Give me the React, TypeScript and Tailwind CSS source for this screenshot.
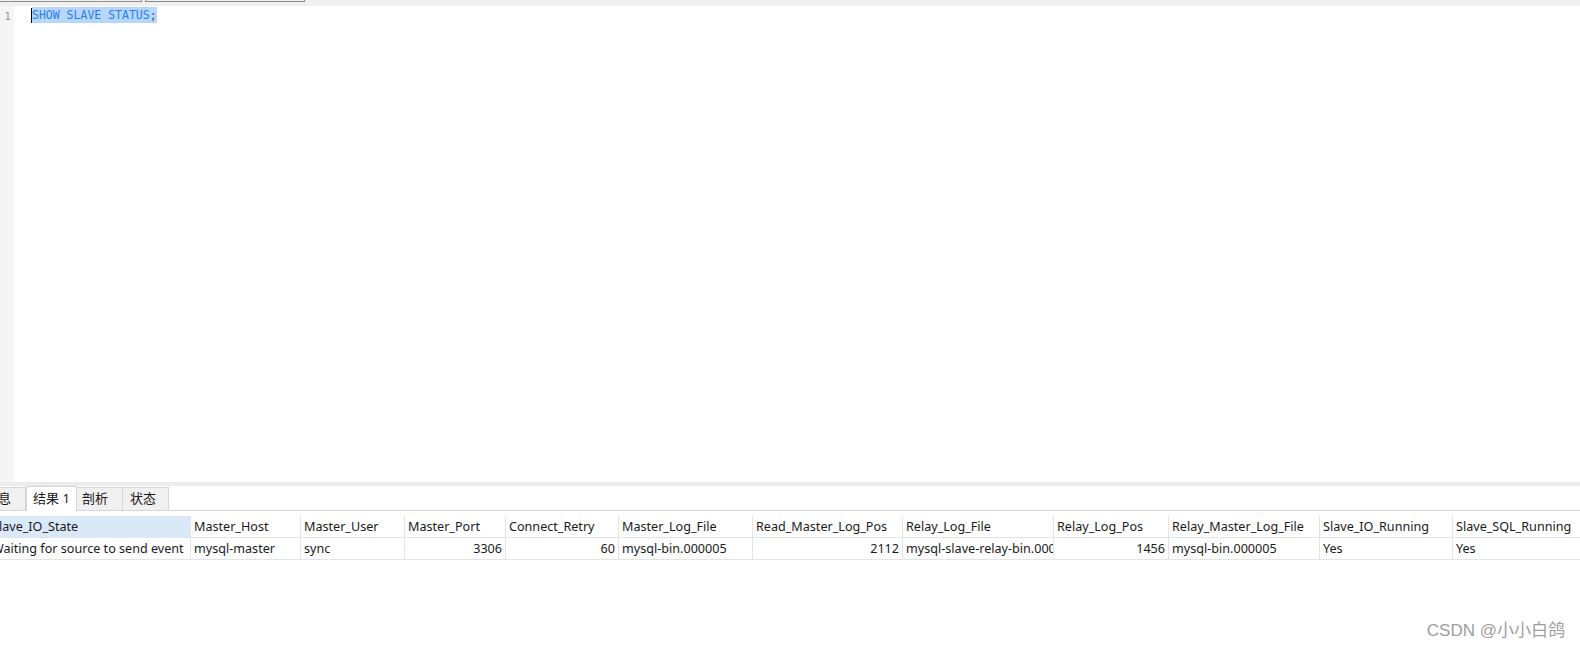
import React from "react";

const cols: { h: string; v: string; w: number; right?: boolean }[] = [
  { h: "Slave_IO_State", v: "Waiting for source to send event", w: 202 },
  { h: "Master_Host", v: "mysql-master", w: 110 },
  { h: "Master_User", v: "sync", w: 104 },
  { h: "Master_Port", v: "3306", w: 101, right: true },
  { h: "Connect_Retry", v: "60", w: 113, right: true },
  { h: "Master_Log_File", v: "mysql-bin.000005", w: 134 },
  { h: "Read_Master_Log_Pos", v: "2112", w: 150, right: true },
  { h: "Relay_Log_File", v: "mysql-slave-relay-bin.000", w: 151 },
  { h: "Relay_Log_Pos", v: "1456", w: 115, right: true },
  { h: "Relay_Master_Log_File", v: "mysql-bin.000005", w: 151 },
  { h: "Slave_IO_Running", v: "Yes", w: 133 },
  { h: "Slave_SQL_Running", v: "Yes", w: 160 },
];

export default function App() {
  return (
    <div
      className="w-[1580px] h-[647px] bg-white relative overflow-hidden text-[#1a1a1a]"
      style={{ fontFamily: '"Noto Sans", "Noto Sans CJK SC", sans-serif' }}
    >
      {/* top strip */}
      <div className="h-[6px] bg-[#f0f0f0] flex">
        <div className="w-[142px] h-[2px] border-r border-b border-[#8c8c8c]" />
        <div className="ml-[3px] w-[160px] h-[2px] border-l border-r border-b border-[#8c8c8c]" />
      </div>

      {/* editor */}
      <div className="flex h-[476px]">
        <div className="w-[14px] bg-[#f5f5f5] flex justify-center pt-[4px]">
          <span
            className="text-[11px] leading-[14px] text-[#9a9a9a] pl-[1px]"
            style={{ fontFamily: '"DejaVu Sans Mono", monospace' }}
          >
            1
          </span>
        </div>
        <div className="pl-[17px] pt-[1px]">
          <div className="flex items-center h-[16px]">
            <div className="w-[1px] h-[15px] bg-black" />
            <span
              className="bg-[#b7d6fd] text-[11.5px] leading-[16px] text-[#2a7ef0]"
              style={{ fontFamily: '"DejaVu Sans Mono", monospace' }}
            >
              SHOW SLAVE STATUS<span className="text-[#555]">;</span>
            </span>
          </div>
        </div>
      </div>

      {/* divider */}
      <div className="h-[4px] bg-[#ececec]" />

      {/* tabs */}
      <div className="h-[25px] flex items-end border-b border-[#d6d6d6] text-[13px]">
        <div className="ml-[-22px] w-[48px] h-[23px] bg-[#f0f0f0] border border-b-0 border-[#d6d6d6] pl-[6px] leading-[21px]">
          信息
        </div>
        <div className="w-[51px] bg-white border border-b-0 border-[#d6d6d6] pl-[6px] leading-[23px] mb-[-1px] h-[25px]">
          结果 1
        </div>
        <div className="w-[46px] h-[23px] bg-[#f0f0f0] border border-b-0 border-l-0 border-[#d6d6d6] pl-[5px] leading-[21px]">
          剖析
        </div>
        <div className="w-[46px] h-[23px] bg-[#f0f0f0] border border-b-0 border-l-0 border-[#d6d6d6] pl-[7px] leading-[21px]">
          状态
        </div>
      </div>

      {/* table */}
      <div className="mt-[5px] ml-[-12px] text-[12.6px] whitespace-nowrap">
        <div className="flex h-[22px] border-b border-[#e4e4e4] w-[1700px]">
          {cols.map((c, i) => (
            <div
              key={c.h}
              className={
                "overflow-hidden leading-[21px] " +
                (i === 0 ? "bg-[#d9e9f8] pl-[4px]" : "border-l border-[#e4e4e4] pl-[3px]")
              }
              style={{ width: c.w }}
            >
              {c.h}
            </div>
          ))}
        </div>
        <div className="flex h-[22px] border-b border-[#e4e4e4] w-[1700px]">
          {cols.map((c, i) => (
            <div
              key={c.h}
              className={
                "overflow-hidden leading-[21px] " +
                (i === 0 ? "pl-[4px]" : "border-l border-[#e4e4e4] pl-[3px] ") +
                (c.right ? " text-right pr-[3px]" : "")
              }
              style={{ width: c.w }}
            >
              {c.v}
            </div>
          ))}
        </div>
      </div>

      {/* watermark */}
      <div
        className="absolute right-[15px] top-[619px] text-[17px] leading-[24px] text-[#9e9e9e]"
        style={{ fontFamily: '"Liberation Sans", "Noto Sans CJK SC", sans-serif' }}
      >
        CSDN @小小白鸽
      </div>
    </div>
  );
}
